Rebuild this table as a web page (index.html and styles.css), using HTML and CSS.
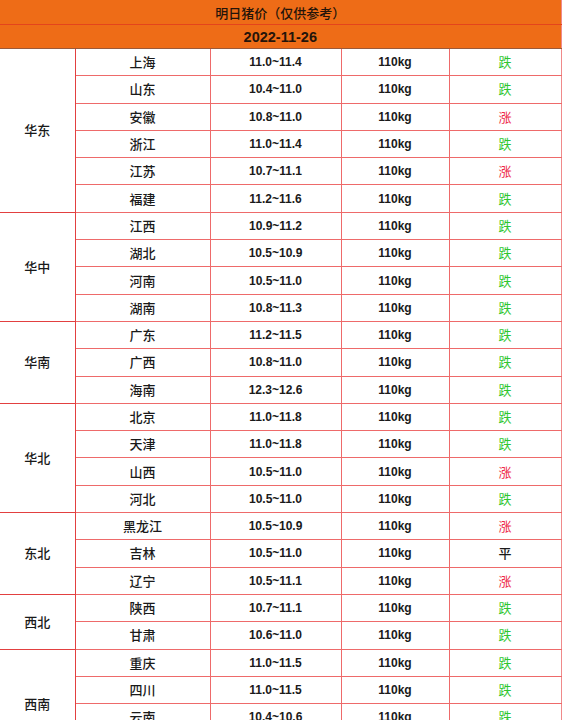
FILE: index.html
```html
<!DOCTYPE html>
<html lang="zh-CN">
<head>
<meta charset="utf-8">
<title>明日猪价</title>
<link rel="stylesheet" href="styles.css">
</head>
<body>
<table class="price">
  <colgroup>
    <col class="c-region"><col class="c-prov"><col class="c-price"><col class="c-wt"><col class="c-trend">
  </colgroup>
  <thead>
    <tr class="title"><th colspan="5">明日猪价（仅供参考）</th></tr>
    <tr class="date"><th colspan="5">2022-11-26</th></tr>
  </thead>
  <tbody class="grp">
    <tr><td class="region" rowspan="6">华东</td><td class="prov">上海</td><td class="num">11.0~11.4</td><td class="num">110kg</td><td class="down">跌</td></tr>
    <tr><td class="prov">山东</td><td class="num">10.4~11.0</td><td class="num">110kg</td><td class="down">跌</td></tr>
    <tr><td class="prov">安徽</td><td class="num">10.8~11.0</td><td class="num">110kg</td><td class="up">涨</td></tr>
    <tr><td class="prov">浙江</td><td class="num">11.0~11.4</td><td class="num">110kg</td><td class="down">跌</td></tr>
    <tr><td class="prov">江苏</td><td class="num">10.7~11.1</td><td class="num">110kg</td><td class="up">涨</td></tr>
    <tr><td class="prov">福建</td><td class="num">11.2~11.6</td><td class="num">110kg</td><td class="down">跌</td></tr>
  </tbody>
  <tbody class="grp">
    <tr><td class="region" rowspan="4">华中</td><td class="prov">江西</td><td class="num">10.9~11.2</td><td class="num">110kg</td><td class="down">跌</td></tr>
    <tr><td class="prov">湖北</td><td class="num">10.5~10.9</td><td class="num">110kg</td><td class="down">跌</td></tr>
    <tr><td class="prov">河南</td><td class="num">10.5~11.0</td><td class="num">110kg</td><td class="down">跌</td></tr>
    <tr><td class="prov">湖南</td><td class="num">10.8~11.3</td><td class="num">110kg</td><td class="down">跌</td></tr>
  </tbody>
  <tbody class="grp">
    <tr><td class="region" rowspan="3">华南</td><td class="prov">广东</td><td class="num">11.2~11.5</td><td class="num">110kg</td><td class="down">跌</td></tr>
    <tr><td class="prov">广西</td><td class="num">10.8~11.0</td><td class="num">110kg</td><td class="down">跌</td></tr>
    <tr><td class="prov">海南</td><td class="num">12.3~12.6</td><td class="num">110kg</td><td class="down">跌</td></tr>
  </tbody>
  <tbody class="grp">
    <tr><td class="region" rowspan="4">华北</td><td class="prov">北京</td><td class="num">11.0~11.8</td><td class="num">110kg</td><td class="down">跌</td></tr>
    <tr><td class="prov">天津</td><td class="num">11.0~11.8</td><td class="num">110kg</td><td class="down">跌</td></tr>
    <tr><td class="prov">山西</td><td class="num">10.5~11.0</td><td class="num">110kg</td><td class="up">涨</td></tr>
    <tr><td class="prov">河北</td><td class="num">10.5~11.0</td><td class="num">110kg</td><td class="down">跌</td></tr>
  </tbody>
  <tbody class="grp">
    <tr><td class="region" rowspan="3">东北</td><td class="prov">黑龙江</td><td class="num">10.5~10.9</td><td class="num">110kg</td><td class="up">涨</td></tr>
    <tr><td class="prov">吉林</td><td class="num">10.5~11.0</td><td class="num">110kg</td><td class="flat">平</td></tr>
    <tr><td class="prov">辽宁</td><td class="num">10.5~11.1</td><td class="num">110kg</td><td class="up">涨</td></tr>
  </tbody>
  <tbody class="grp">
    <tr><td class="region" rowspan="2">西北</td><td class="prov">陕西</td><td class="num">10.7~11.1</td><td class="num">110kg</td><td class="down">跌</td></tr>
    <tr><td class="prov">甘肃</td><td class="num">10.6~11.0</td><td class="num">110kg</td><td class="down">跌</td></tr>
  </tbody>
  <tbody class="grp">
    <tr><td class="region" rowspan="4">西南</td><td class="prov">重庆</td><td class="num">11.0~11.5</td><td class="num">110kg</td><td class="down">跌</td></tr>
    <tr><td class="prov">四川</td><td class="num">11.0~11.5</td><td class="num">110kg</td><td class="down">跌</td></tr>
    <tr><td class="prov">云南</td><td class="num">10.4~10.6</td><td class="num">110kg</td><td class="down">跌</td></tr>
    <tr><td class="prov">贵州</td><td class="num">10.5~10.8</td><td class="num">110kg</td><td class="down">跌</td></tr>
  </tbody>
</table>
</body>
</html>
```
FILE: styles.css
```css
html, body {
  margin: 0;
  padding: 0;
  background: #ffffff;
}
body {
  font-family: "Noto Sans CJK SC", "Liberation Sans", sans-serif;
  color: #1a1a1a;
}
.price {
  width: 561px;
  table-layout: fixed;
  border-collapse: collapse;
}
.c-region { width: 75px; }
.c-prov { width: 135px; }
.c-price { width: 131px; }
.c-wt { width: 108px; }
.c-trend { width: 112px; }

.price th {
  background: #ee6c17;
  padding: 0;
  text-align: center;
  color: #24140a;
  border-right: 1px solid #f08a8a;
}
.title th {
  height: 24px;
  font-size: 13px;
  font-weight: 500;
  border-bottom: 1px solid #e4441c;
  line-height: 23px;
}
.date th {
  height: 23px;
  font-family: "Liberation Sans", "Noto Sans CJK SC", sans-serif;
  font-size: 14.5px;
  font-weight: 700;
  border-bottom: 1px solid #9a5a3a;
  line-height: 22px;
}
.price td {
  height: 26.3px;
  padding: 0;
  text-align: center;
  vertical-align: middle;
  border: 1px solid #ee6a6a;
  font-size: 13px;
  font-weight: 500;
  line-height: 16px;
}
.price td:last-child {
  border-right: 1px solid #f08a8a;
}
.price td.region {
  border-left: none;
  border-top: 1px solid #e24040;
  border-bottom: 1px solid #e24040;
  border-right: 1px solid #e24040;
  color: #1a1a1a;
}
.grp tr:first-child td {
  border-top: 1px solid #e03a3a;
}
.price td.prov {
  color: #1a1a1a;
}
.price td.num {
  font-family: "Liberation Sans", "Noto Sans CJK SC", sans-serif;
  font-weight: 700;
  font-size: 12px;
  color: #1a1a1a;
}
.price td.down { color: #2fc62f; font-weight: 400; }
.price td.up { color: #ee2a48; font-weight: 400; }
.price td.flat { color: #1a1a1a; }
```
